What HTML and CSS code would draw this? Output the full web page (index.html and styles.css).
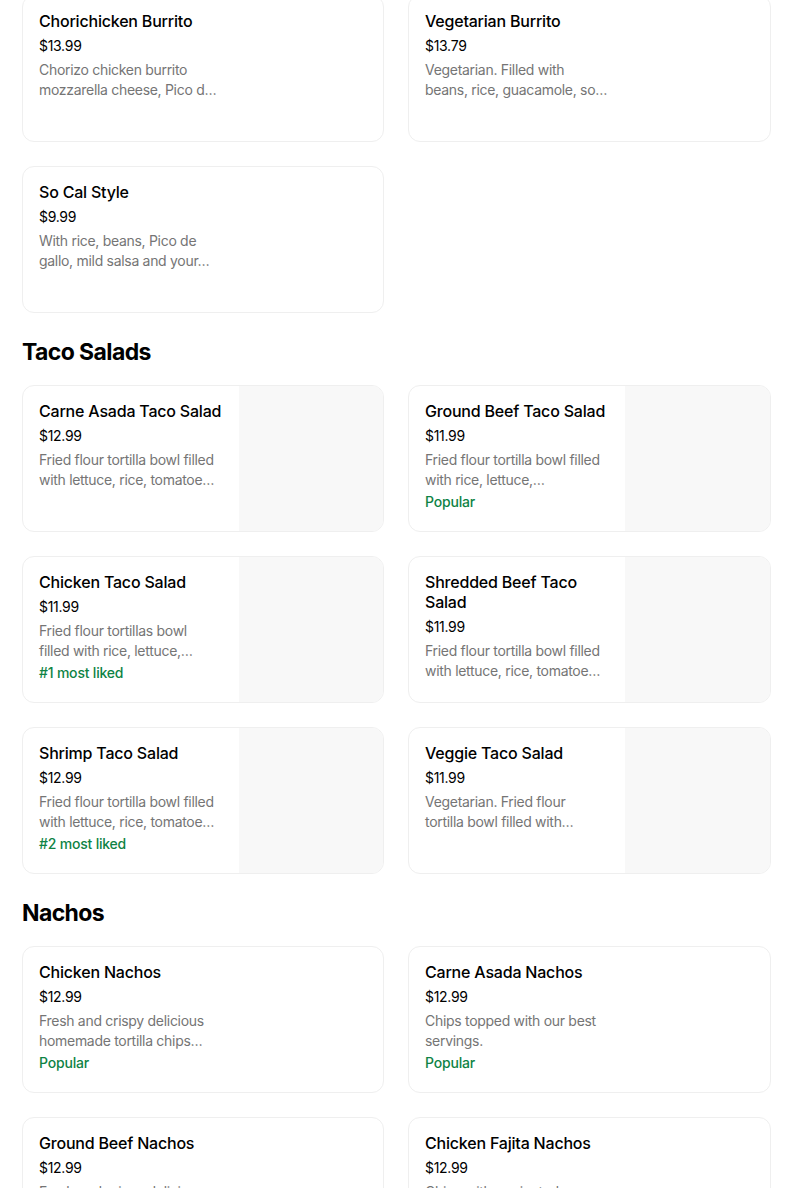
FILE: index.html
```html
<!DOCTYPE html>
<html>
<head>
<meta charset="utf-8">
<link rel="stylesheet" href="styles.css">
</head>
<body>
<main class="menu">
  <section class="section first">
    <div class="grid">
      <div class="card">
        <div class="info">
          <div class="title">Chorichicken Burrito</div>
          <div class="price">$13.99</div>
          <div class="desc"><span>Chorizo chicken burrito</span><span>mozzarella cheese, Pico d…</span></div>
        </div>
        <div class="thumb none"></div>
      </div>
      <div class="card">
        <div class="info">
          <div class="title">Vegetarian Burrito</div>
          <div class="price">$13.79</div>
          <div class="desc"><span>Vegetarian. Filled with</span><span>beans, rice, guacamole, so…</span></div>
        </div>
        <div class="thumb none"></div>
      </div>
      <div class="card">
        <div class="info">
          <div class="title">So Cal Style</div>
          <div class="price">$9.99</div>
          <div class="desc"><span>With rice, beans, Pico de</span><span>gallo, mild salsa and your…</span></div>
        </div>
        <div class="thumb none"></div>
      </div>
    </div>
  </section>

  <section class="section">
    <h2 class="heading">Taco Salads</h2>
    <div class="grid">
      <div class="card">
        <div class="info">
          <div class="title">Carne Asada Taco Salad</div>
          <div class="price">$12.99</div>
          <div class="desc"><span>Fried flour tortilla bowl filled</span><span>with lettuce, rice, tomatoe…</span></div>
        </div>
        <div class="thumb"></div>
      </div>
      <div class="card">
        <div class="info">
          <div class="title">Ground Beef Taco Salad</div>
          <div class="price">$11.99</div>
          <div class="desc"><span>Fried flour tortilla bowl filled</span><span>with rice, lettuce,…</span></div>
          <div class="tag">Popular</div>
        </div>
        <div class="thumb"></div>
      </div>
      <div class="card">
        <div class="info">
          <div class="title">Chicken Taco Salad</div>
          <div class="price">$11.99</div>
          <div class="desc"><span>Fried flour tortillas bowl</span><span>filled with rice, lettuce,…</span></div>
          <div class="tag">#1 most liked</div>
        </div>
        <div class="thumb"></div>
      </div>
      <div class="card">
        <div class="info">
          <div class="title">Shredded Beef Taco Salad</div>
          <div class="price">$11.99</div>
          <div class="desc"><span>Fried flour tortilla bowl filled</span><span>with lettuce, rice, tomatoe…</span></div>
        </div>
        <div class="thumb"></div>
      </div>
      <div class="card">
        <div class="info">
          <div class="title">Shrimp Taco Salad</div>
          <div class="price">$12.99</div>
          <div class="desc"><span>Fried flour tortilla bowl filled</span><span>with lettuce, rice, tomatoe…</span></div>
          <div class="tag">#2 most liked</div>
        </div>
        <div class="thumb"></div>
      </div>
      <div class="card">
        <div class="info">
          <div class="title">Veggie Taco Salad</div>
          <div class="price">$11.99</div>
          <div class="desc"><span>Vegetarian. Fried flour</span><span>tortilla bowl filled with…</span></div>
        </div>
        <div class="thumb"></div>
      </div>
    </div>
  </section>

  <section class="section">
    <h2 class="heading">Nachos</h2>
    <div class="grid">
      <div class="card">
        <div class="info">
          <div class="title">Chicken Nachos</div>
          <div class="price">$12.99</div>
          <div class="desc"><span>Fresh and crispy delicious</span><span>homemade tortilla chips…</span></div>
          <div class="tag">Popular</div>
        </div>
        <div class="thumb none"></div>
      </div>
      <div class="card">
        <div class="info">
          <div class="title">Carne Asada Nachos</div>
          <div class="price">$12.99</div>
          <div class="desc"><span>Chips topped with our best</span><span>servings.</span></div>
          <div class="tag">Popular</div>
        </div>
        <div class="thumb none"></div>
      </div>
      <div class="card">
        <div class="info">
          <div class="title">Ground Beef Nachos</div>
          <div class="price">$12.99</div>
          <div class="desc"><span>Fresh and crispy delicious</span><span>homemade tortilla chips…</span></div>
        </div>
        <div class="thumb none"></div>
      </div>
      <div class="card">
        <div class="info">
          <div class="title">Chicken Fajita Nachos</div>
          <div class="price">$12.99</div>
          <div class="desc"><span>Chips with marinated</span><span>chicken fajita, peppers…</span></div>
        </div>
        <div class="thumb none"></div>
      </div>
    </div>
  </section>
</main>
</body>
</html>
```

FILE: styles.css
```css
* { box-sizing: border-box; }

html, body {
  margin: 0;
  padding: 0;
  background: #ffffff;
}

body {
  font-family: Inter, "Liberation Sans", sans-serif;
  color: #000000;
  overflow: hidden;
}

.menu {
  width: 771px;
  padding-left: 22px;
}

.section.first {
  margin-top: -5px;
}

.heading {
  margin: 23px 0 17px;
  font-size: 23px;
  line-height: 32px;
  font-weight: 700;
  letter-spacing: -0.6px;
}

.grid {
  display: grid;
  grid-template-columns: 362px 363px;
  gap: 24px;
}

.card {
  display: flex;
  height: 147px;
  border: 1px solid #efefef;
  border-radius: 12px;
  overflow: hidden;
  background: #ffffff;
}

.info {
  flex: 0 0 216px;
  padding: 15px 16px 16px;
  display: flex;
  flex-direction: column;
}

.title {
  font-size: 16px;
  line-height: 20px;
  font-weight: 500;
  letter-spacing: -0.2px;
  color: #000000;
}

.price {
  margin-top: 5px;
  font-size: 14px;
  line-height: 20px;
  font-weight: 400;
  letter-spacing: -0.3px;
  color: #000000;
}

.desc {
  margin-top: 4px;
  display: flex;
  flex-direction: column;
  font-size: 14px;
  line-height: 20px;
  color: #757575;
  letter-spacing: -0.3px;
  white-space: nowrap;
}

.tag {
  margin-top: 2px;
  font-size: 14px;
  line-height: 20px;
  font-weight: 500;
  color: #0e8345;
  letter-spacing: -0.2px;
}

.thumb {
  flex: 1;
  background: #f8f8f8;
}

.thumb.none {
  background: transparent;
}
```
